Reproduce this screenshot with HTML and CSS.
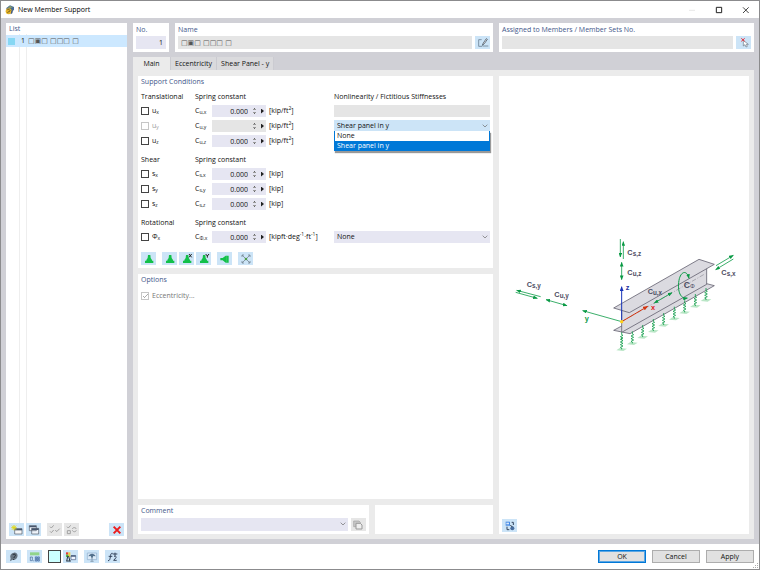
FILE: index.html
```html
<!DOCTYPE html>
<html lang="en">
<head>
<meta charset="utf-8">
<title>New Member Support</title>
<link rel="stylesheet" href="styles.css">
</head>
<body>
<div class="window">
  <header class="titlebar">
    <svg class="app-icon" viewBox="0 0 30 30"><path d="M4 9 15 1l12 5v9l-9 6-13-4z" fill="#4a6b94"/><path d="M8 7l8-4 7 4-7 3z" fill="#86a06d"/><circle cx="11" cy="19" r="9" fill="#e3b32a"/><path d="M7 14c5-2 9 1 8 4s-6 1-8 5" fill="none" stroke="#77601b" stroke-width="3"/><path d="M19 18l5-2-2 9-5 3z" fill="#3e567f"/></svg>
    <h1>New Member Support</h1>
    <div class="window-controls">
      <button class="wc" aria-label="Minimize" disabled><svg viewBox="0 0 24 24"><path d="M3 13h18" stroke="#ddd" stroke-width="2"/></svg></button>
      <button class="wc" aria-label="Maximize"><svg viewBox="0 0 24 24"><path d="M4 4h16v16H4z" fill="none" stroke="#222" stroke-width="3"/></svg></button>
      <button class="wc" aria-label="Close"><svg viewBox="0 0 24 24"><path d="M3 4l17 17M20 4 3 21" stroke="#222" stroke-width="2.5"/></svg></button>
    </div>
  </header>

  <main class="workspace">
    <aside class="card list">
      <h2>List</h2>
      <div class="list-body">
        <div class="list-row"><span class="swatch"></span><span class="row-no">1</span><span class="boxes">□▣□ □□□ □</span></div>
      </div>
      <div class="list-tools">
        <button class="tool" aria-label="New"><svg viewBox="0 0 42 36"><path d="M14 14h22v16H14z" fill="#f7f7f7" stroke="#505968" stroke-width="2"/><path d="M14 14h22v5H14z" fill="#46566d"/><path d="M12 3v16M4 11h16M6 5l12 12M18 5 6 17" stroke="#e0d91b" stroke-width="3"/></svg></button>
        <button class="tool" aria-label="Copy"><svg viewBox="0 0 42 36"><path d="M7 5h21v15H7zM14 13h21v17H14z" fill="#eef3fa" stroke="#505968" stroke-width="2"/><path d="M7 5h21v5H7zM14 13h21v5H14z" fill="#46566d"/></svg></button>
        <button class="tool muted gap" aria-label="Check all" disabled><svg viewBox="0 0 42 36"><path d="M6 8l4 4 7-8M6 22l4 4 7-8M22 18l4 5 9-9" fill="none" stroke="#a0a0a0" stroke-width="3"/></svg></button>
        <button class="tool muted" aria-label="Invert check" disabled><svg viewBox="0 0 42 36"><path d="M6 8l4 4 7-8M7 20h9v9H7zM22 15c2-6 10-5 12 0M34 19c-2 6-10 5-12 0" fill="none" stroke="#a0a0a0" stroke-width="3"/></svg></button>
        <button class="tool end" aria-label="Delete"><svg viewBox="0 0 42 36"><path d="M11 8l20 20M31 8 11 28" stroke="#ec1c1c" stroke-width="6"/></svg></button>
      </div>
    </aside>

    <div class="detail">
      <div class="top-fields">
        <div class="card no-card"><label for="no">No.</label><input id="no" class="field" value="1"></div>
        <div class="card wide-card"><label for="name">Name</label>
          <div class="field-line"><input id="name" class="field off boxes" value="□▣□ □□□ □" readonly>
          <button class="tool" aria-label="Edit name"><svg viewBox="0 0 42 36"><path d="M17 8H8v20h11M21 27h16" fill="none" stroke="#56697d" stroke-width="2"/><path d="M19 25l3-7 9-13 3 2-9 13z" fill="#fff" stroke="#293745" stroke-width="2"/></svg></button></div></div>
        <div class="card wide-card side"><label for="assigned">Assigned to Members / Member Sets No.</label>
          <div class="field-line"><input id="assigned" class="field off" readonly>
          <button class="tool" aria-label="Select members"><svg viewBox="0 0 42 36"><path d="M19 10v17l5-4 3 7 4-2-3-6h6z" fill="#fff" stroke="#687482" stroke-width="2"/><path d="M13 4l10 9M23 4l-10 9" stroke="#e52d38" stroke-width="3"/></svg></button></div></div>
      </div>

      <nav class="tabs" role="tablist">
        <button class="tab active" role="tab" aria-selected="true">Main</button>
        <button class="tab" role="tab">Eccentricity</button>
        <button class="tab" role="tab">Shear Panel - y</button>
      </nav>

      <div class="page">
        <div class="page-main">
          <section class="panel conditions">
            <h2>Support Conditions</h2>
            <div class="group">
              <h3 class="c-check">Translational</h3><h3 class="c-value">Spring constant</h3><h3 class="c-combo">Nonlinearity / Fictitious Stiffnesses</h3>
              <label class="c-check"><input type="checkbox"><span>u<sub>x</sub></span></label>
              <label for="cux">C<sub>u,x</sub></label>
              <div class="spin"><input id="cux" value="0.000"><button class="step" aria-label="Step"></button><button class="more" aria-label="More"></button></div>
              <span>[kip/ft<sup>2</sup>]</span>
              <div class="combo blank"></div>

              <label class="c-check dim"><input type="checkbox" disabled><span>u<sub>y</sub></span></label>
              <label for="cuy">C<sub>u,y</sub></label>
              <div class="spin off"><input id="cuy" disabled><button class="step" aria-label="Step"></button><button class="more" aria-label="More"></button></div>
              <span>[kip/ft<sup>2</sup>]</span>
              <div class="combo open">
                <select aria-label="Nonlinearity in y"><option>None</option><option selected>Shear panel in y</option></select>
                <svg class="chev" viewBox="0 0 18 12"><path d="M2 2l7 7 7-7"/></svg>
                <ul class="dropdown" role="listbox"><li role="option">None</li><li role="option" aria-selected="true" class="picked">Shear panel in y</li></ul>
              </div>

              <label class="c-check"><input type="checkbox"><span>u<sub>z</sub></span></label>
              <label for="cuz">C<sub>u,z</sub></label>
              <div class="spin"><input id="cuz" value="0.000"><button class="step" aria-label="Step"></button><button class="more" aria-label="More"></button></div>
              <span>[kip/ft<sup>2</sup>]</span>
            </div>

            <div class="group">
              <h3 class="c-check">Shear</h3><h3 class="c-value">Spring constant</h3>
              <label class="c-check"><input type="checkbox"><span>s<sub>x</sub></span></label>
              <label for="csx">C<sub>s,x</sub></label>
              <div class="spin"><input id="csx" value="0.000"><button class="step" aria-label="Step"></button><button class="more" aria-label="More"></button></div>
              <span>[kip]</span>
              <label class="c-check"><input type="checkbox"><span>s<sub>y</sub></span></label>
              <label for="csy">C<sub>s,y</sub></label>
              <div class="spin"><input id="csy" value="0.000"><button class="step" aria-label="Step"></button><button class="more" aria-label="More"></button></div>
              <span>[kip]</span>
              <label class="c-check"><input type="checkbox"><span>s<sub>z</sub></span></label>
              <label for="csz">C<sub>s,z</sub></label>
              <div class="spin"><input id="csz" value="0.000"><button class="step" aria-label="Step"></button><button class="more" aria-label="More"></button></div>
              <span>[kip]</span>
            </div>

            <div class="group">
              <h3 class="c-check">Rotational</h3><h3 class="c-value">Spring constant</h3>
              <label class="c-check"><input type="checkbox"><span>Φ<sub>x</sub></span></label>
              <label for="cphi">C<sub>Φ,x</sub></label>
              <div class="spin"><input id="cphi" value="0.000"><button class="step" aria-label="Step"></button><button class="more" aria-label="More"></button></div>
              <span>[kipft·deg<sup>-1</sup>·ft<sup>-1</sup>]</span>
              <div class="combo"><select aria-label="Rotational nonlinearity"><option>None</option></select><svg class="chev" viewBox="0 0 18 12"><path d="M2 2l7 7 7-7"/></svg></div>
            </div>

            <div class="presets">
              <button class="tool" aria-label="Fixed support"><svg viewBox="0 0 42 36"><use href="#foot"/></svg></button>
              <button class="tool gap" aria-label="Hinged support"><svg viewBox="0 0 42 36"><use href="#foot"/></svg></button>
              <button class="tool" aria-label="Support in X"><svg viewBox="0 0 42 36"><use href="#foot"/><path d="M27 3l8 10M35 3l-8 10" stroke="#222" stroke-width="3"/></svg></button>
              <button class="tool" aria-label="Support in Y"><svg viewBox="0 0 42 36"><use href="#foot"/><path d="M26 3l5 6 5-6M31 8v6" fill="none" stroke="#222" stroke-width="3"/></svg></button>
              <button class="tool gap" aria-label="Lateral support"><svg viewBox="0 0 42 36"><path d="M7 15h7l9-7h9v21h-9l-9-7H7z" fill="#12c04a"/><path d="M26 8v21" stroke="#6be18c" stroke-width="1"/></svg></button>
              <button class="tool gap" aria-label="Free"><svg viewBox="0 0 42 36"><path d="M10 7l22 22M32 7 10 29" stroke="#61707d" stroke-width="2"/><path d="M9 12V6h6M27 6h6v6M9 24v6h6M27 30h6v-6" fill="none" stroke="#61707d" stroke-width="2"/><circle cx="21" cy="18" r="4" fill="#4f9b48"/></svg></button>
            </div>
          </section>

          <section class="panel options">
            <h2>Options</h2>
            <label class="check-line dim"><input type="checkbox" checked disabled><span>Eccentricity...</span></label>
          </section>

          <div class="bottom">
            <section class="panel comment">
              <h2><label for="comment">Comment</label></h2>
              <div class="field-line">
                <div class="combo"><select id="comment"><option></option></select><svg class="chev" viewBox="0 0 18 12"><path d="M2 2l7 7 7-7"/></svg></div>
                <button class="tool muted" aria-label="Comment library" disabled><svg viewBox="0 0 42 36"><path d="M8 6h16l4 4v13H8z" fill="#c7c7c7" stroke="#a0a0a0" stroke-width="2"/><path d="M15 13h13l5 5v12H15z" fill="#eee" stroke="#999" stroke-width="3"/></svg></button>
              </div>
            </section>
            <section class="panel spare"></section>
          </div>
        </div>

        <section class="panel preview">
          <div class="drawing">
            <svg viewBox="-3 0 750 405" role="img" aria-label="Member support diagram">
              <defs>
                <marker id="ag" viewBox="0 0 10 10" refX="9" refY="5" markerWidth="14" markerHeight="11" markerUnits="userSpaceOnUse" orient="auto-start-reverse" preserveAspectRatio="none"><path d="M0 0 10 5 0 10z" fill="#0a9a45"/></marker>
                <marker id="ab" viewBox="0 0 10 10" refX="9" refY="5" markerWidth="15" markerHeight="12" markerUnits="userSpaceOnUse" orient="auto" preserveAspectRatio="none"><path d="M0 0 10 5 0 10z" fill="#1734b8"/></marker>
                <marker id="ar" viewBox="0 0 10 10" refX="9" refY="5" markerWidth="15" markerHeight="12" markerUnits="userSpaceOnUse" orient="auto" preserveAspectRatio="none"><path d="M0 0 10 5 0 10z" fill="#d43410"/></marker>
                <g id="spring"><path d="M-16 3-6-4 16-2 5 5z" fill="#b9e6c6"/><path d="M0 0v-4l-4-2 8-4-8-4 8-4-8-4 8-4-4-2v-8" fill="none" stroke="#0a9a45" stroke-width="2.4"/></g>
                <path id="foot" d="M18 6h7l1 9 4 6v2h4v7H9v-7h4v-2l4-6z" fill="#12c04a"/>
              </defs>
              <g stroke="#62606e" stroke-width="2.4" stroke-linejoin="round" fill="#dbdae0">
                <path d="M341 316 365 303 597 170 643 182 390 326z"/>
                <path d="M365 256v66L620 178v-51z"/>
                <path d="M341 249 597 103 643 118 388 263z"/>
              </g>
              <path d="M365 290 616 146" stroke="#85858d" stroke-width="1.8" stroke-dasharray="14 5 3 5"/>
              <use href="#spring" x="397" y="355"/><use href="#spring" x="428" y="336"/><use href="#spring" x="460" y="318"/><use href="#spring" x="491" y="300"/><use href="#spring" x="523" y="281"/><use href="#spring" x="554" y="262"/><use href="#spring" x="586" y="243"/><use href="#spring" x="618" y="225"/>
              <use href="#spring" x="365" y="373"/>
              <path d="M365 345l-4-2 8-4-8-4 8-4-4-2v-7" fill="none" stroke="#0a9a45" stroke-width="2.4"/>
              <g fill="none" stroke="#0a9a45" stroke-width="2.4">
                <path d="M361 42v54" marker-end="url(#ag)"/>
                <path d="M370 102V50" marker-end="url(#ag)"/>
                <path d="M648 122l52-31" marker-end="url(#ag)"/>
                <path d="M700 102l-53 32" marker-end="url(#ag)"/>
                <path d="M122 215 50 196" marker-end="url(#ag)"/>
                <path d="M47 202l65 18" marker-end="url(#ag)"/>
                <path d="M365 112v52" marker-start="url(#ag)" marker-end="url(#ag)"/>
                <path d="M138 224l63 18" marker-start="url(#ag)" marker-end="url(#ag)"/>
                <path d="M463 234l53-31" marker-start="url(#ag)" marker-end="url(#ag)"/>
                <path d="M365 290 248 257" marker-end="url(#ag)"/>
                <path d="M567 160C561 136 545 137 538 161c-7 30 0 63 24 58" stroke-width="3" marker-start="url(#ag)" marker-end="url(#ag)"/>
              </g>
              <path d="M365 290V185" stroke="#1734b8" stroke-width="3" marker-end="url(#ab)"/>
              <path d="M365 290 443 244" stroke="#d43410" stroke-width="3" marker-end="url(#ar)"/>
              <circle cx="365" cy="290" r="5" fill="#ffd21a"/>
              <g class="marks">
                <text x="382" y="91">C<tspan class="s" dy="3">s,z</tspan></text>
                <text x="382" y="149">C<tspan class="s" dy="3">u,z</tspan></text>
                <text x="664" y="149">C<tspan class="s" dy="3">s,x</tspan></text>
                <text x="80" y="186">C<tspan class="s" dy="3">s,y</tspan></text>
                <text x="163" y="217">C<tspan class="s" dy="3">u,y</tspan></text>
                <text x="443" y="206">C<tspan class="s" dy="3">u,x</tspan></text>
                <text x="551" y="188" class="big">C<tspan class="phi" dy="2">Φ</tspan></text>
                <text x="377" y="195" class="z">z</text>
                <text x="453" y="254" class="x">x</text>
                <text x="254" y="289" class="y">y</text>
              </g>
            </svg>
          </div>
          <div class="preview-tools"><button class="tool" aria-label="Switch view"><svg viewBox="0 0 42 36"><path d="M8 5h13v12H8z" fill="#4389e4"/><path d="M10 8h8v5h-8z" fill="#d9e8fa"/><path d="M12 20v9h7M26 7h5v8" fill="none" stroke="#33455d" stroke-width="3"/><circle cx="28" cy="25" r="6" fill="#486d9e"/><path d="M22 15l6 6" stroke="#2d394a" stroke-width="3"/></svg></button></div>
        </section>
      </div>
    </div>
  </main>

  <footer class="footer">
    <button class="tool" aria-label="Help"><svg viewBox="0 0 42 36"><path d="M21 5c11-2 14 12 7 18-5 5-11 3-11 3l-8 5 2-9C7 13 13 6 21 5z" fill="#677583"/><path d="M17 12c3-5 10-2 8 2-1 3-4 3-4 7M20 24v3" fill="none" stroke="#222a33" stroke-width="3"/></svg></button>
    <button class="tool gap" aria-label="Units"><svg viewBox="0 0 42 36"><path d="M6 4h28v9H6z" fill="#91d48b"/><path d="M20 15h15v17H20z" fill="#a9cbf4"/><path d="M7 18h6v11H7zM17 28v3M22 18h5v5h-5zM29 18h5v5h-5zM22 25h5v5h-5zM29 25h5v5h-5z" fill="none" stroke="#3d6094" stroke-width="2"/></svg></button>
    <button class="color gap" aria-label="Color"></button>
    <button class="tool" aria-label="Display"><svg viewBox="0 0 42 36"><path d="M6 4h7v7H6z" fill="#e83b2f"/><path d="M6 11h7v7H6z" fill="#4dbb48"/><path d="M13 4h6v14h-6z" fill="#eed23f"/><path d="M8 31l3-15h3l4 15M8 30h12" fill="none" stroke="#263341" stroke-width="3"/><path d="M21 14h14v12H21z" fill="#eff5ff" stroke="#4a5c80" stroke-width="2"/><path d="M21 13h14v4H21z" fill="#405477"/></svg></button>
    <button class="tool gap" aria-label="View"><svg viewBox="0 0 42 36"><path d="M7 6h28v20H7z" fill="#dcebf8" stroke="#8dabcb" stroke-width="2"/><path d="M10 16c4-10 18-11 22 0l-7-1-4 8-4-8z" fill="#53718d"/><path d="M21 19v12M16 31h10" stroke="#6d8397" stroke-width="2"/></svg></button>
    <button class="tool gap" aria-label="Formula"><svg viewBox="0 0 42 36"><path d="M20 7c-6-2-6 5-7 11s-2 12-7 11M8 16h11M24 17c3-3 8-1 6 3l-7 8h9M20 9h14M27 5v10" fill="none" stroke="#34445d" stroke-width="3"/></svg></button>
    <div class="actions"><button class="btn primary">OK</button><button class="btn">Cancel</button><button class="btn">Apply</button></div>
    <svg class="grip" viewBox="0 0 6 6"><path d="M4 0h1v1H4zM2 2h1v1H2zM4 2h1v1H4zM0 4h1v1H0zM2 4h1v1H2zM4 4h1v1H4z" fill="#aaa"/></svg>
  </footer>
</div>
</body>
</html>
```
FILE: styles.css
```css
* { box-sizing: border-box; }
body {
  margin: 0;
  font: 7px/10px "Open Sans", "Noto Sans", sans-serif;
  color: #111;
}
button, input, select { font: inherit; color: inherit; margin: 0; padding: 0; border: 0; border-radius: 0; }
h1, h2, h3 { margin: 0; font-size: 7px; line-height: 10px; font-weight: 400; }
svg { display: block; }
.window { display: flex; flex-direction: column; min-height: 100vh; border: 1px solid #8b8b8d; background: #fff; }

.titlebar { display: flex; align-items: center; height: 17px; padding-left: 4px; gap: 3px; }
.titlebar h1 { flex: 1; color: #000; }
.app-icon { width: 10px; height: 10px; }
.window-controls { display: flex; }
.wc { width: 27px; height: 16px; display: grid; place-items: center; background: none; }
.wc svg { width: 8px; height: 8px; }

.workspace { flex: 1; display: flex; gap: 6px; padding: 5px; background: #d0d0d6; }
.card { background: #fff; padding: 1px 3px 3px; }
.card > label, h2, .card > h2 { display: block; color: #43578a; font-weight: 500; }
h2 label { display: block; }

.list { width: 121px; display: flex; flex-direction: column; padding: 1px 0 3px; }
.list > h2 { padding-left: 3px; }
.list-body {
  flex: 1;
  background: linear-gradient(#eee, #eee) 13px 0 / 1px 100% no-repeat, linear-gradient(#eee, #eee) 20px 0 / 1px 100% no-repeat;
}
.list-row { display: flex; align-items: center; height: 12px; margin-top: 1px; padding-left: 2px; background: #cce8ff; }
.swatch { width: 7px; height: 7px; background: #86d7f3; }
.row-no { width: 10px; text-align: right; margin-right: 3px; }
.boxes { font-family: "DejaVu Sans", sans-serif; color: #555; }
.list-tools { display: flex; gap: 2px; padding: 0 3px; }

.tool { flex: none; display: grid; place-items: center; width: 15px; height: 13px; background: #cce4f7; }
.tool svg { width: 14px; height: 12px; }
.tool.muted { background: #e6e6e6; }
.tool.gap, .color.gap { margin-left: 4px; }
.tool.end { margin-left: auto; }

.detail { flex: 1; min-width: 0; display: flex; flex-direction: column; }
.top-fields { display: flex; gap: 6px; }
.top-fields label { height: 12px; line-height: 12px; }
.no-card { width: 36px; }
.wide-card { flex: 1; min-width: 0; }
.side { flex: 0 0 255px; }
.field { display: block; width: 100%; min-width: 0; height: 13px; padding: 0 3px; background: #e6e6f2; }
.field.off { background: #e5e5e5; }
.no-card .field { text-align: right; padding-right: 3px; }
.field-line { display: flex; gap: 3px; }
.field-line > .combo { flex: 1; }

.tabs { display: flex; margin-top: 5px; }
.tab { height: 13px; padding: 1px 4px 0; background: #dadadd; border-right: 1px solid #cbcbd1; color: #111; }
.tab.active { width: 38px; background: #ebebeb; }

.page { flex: 1; display: flex; gap: 6px; padding: 6px 5px 5px; background: #ebebeb; }
.page-main { flex: 1; min-width: 0; display: flex; flex-direction: column; gap: 6px; }
.panel { background: #fff; padding: 1px 3px 3px; }
.conditions { display: flex; flex-direction: column; }
.group {
  display: grid;
  grid-template-columns: 54px 17px 54px 65px minmax(0, 1fr);
  grid-template-rows: 10px;
  row-gap: 3px;
  align-items: center;
  margin-bottom: 8px;
}
.conditions > h2 { margin-bottom: 5px; }
.group h3 { white-space: nowrap; color: #111; }
.group > span { padding-left: 3px; white-space: nowrap; }
.c-check { grid-column: 1; }
.c-value { grid-column: 2 / 4; }
.c-combo { grid-column: 5; }
.group > .combo { grid-column: 5; margin-left: 3px; }
.group > .c-combo { margin-left: 3px; }
label.c-check, .check-line { display: flex; align-items: center; gap: 3px; height: 12px; }
.dim { color: #999; }
.check-line { color: #777; }
sub, sup { font-size: 5px; line-height: 0; }
sub { vertical-align: -1px; }
input[type="checkbox"] { appearance: none; width: 8px; height: 8px; border: 1px solid #444; background: #fff; }
input[type="checkbox"]:disabled { border-color: #c6c6c6; }
input[type="checkbox"]:checked {
  background: linear-gradient(-45deg, transparent 45%, #aaa 45% 60%, transparent 60%) 2px 1px / 4px 4px no-repeat, linear-gradient(45deg, transparent 40%, #aaa 40% 65%, transparent 65%) 1px 3px / 2px 2px no-repeat, #fff;
}
.spin { display: flex; align-items: center; height: 12px; background: #e6e6f2; }
.spin input { width: 36px; height: 12px; text-align: right; background: transparent; }
.spin.off { background: #e5e5e5; }
.step { width: 3px; height: 8px; margin-left: 5px; background: linear-gradient(#666, #666) 1px 1px / 1px 1px no-repeat, linear-gradient(#999, #999) 0 2px / 3px 1px no-repeat, linear-gradient(#999, #999) 0 5px / 3px 1px no-repeat, linear-gradient(#666, #666) 1px 6px / 1px 1px no-repeat; }
.more { width: 3px; height: 5px; margin-left: 5px; background: #222; clip-path: polygon(0 0, 100% 50%, 0 100%); }

.combo { position: relative; height: 12px; }
.combo select { display: block; appearance: none; width: 100%; height: 12px; padding: 0 3px; background: #e6e6f2; }
.comment .combo, .comment select { height: 13px; }
.combo.blank { background: #e5e5e5; }
.combo.open select { background: #cce4f7; }
.chev { position: absolute; right: 2px; top: 4px; width: 6px; height: 4px; pointer-events: none; }
.chev path { fill: none; stroke: #666; stroke-width: 2; }
.dropdown { position: absolute; z-index: 2; top: 11px; left: 0; right: 0; margin: 0; padding: 0; list-style: none; background: #fff; border: 1px solid #0078d7; border-top: 0; border-bottom: 0; box-shadow: 1px 2px 1px #999; }
.dropdown li { padding: 0 2px; line-height: 10px; }
.dropdown .picked { background: #0078d7; color: #fff; }

.presets { display: flex; gap: 2px; margin-top: 1px; }
.options { flex: 1; }
.options > h2 { margin-bottom: 5px; }
.bottom { display: flex; gap: 6px; }
.comment { flex: 2; }
.comment h2 { margin-bottom: 2px; }
.spare { flex: 1; }

.preview { flex: 0 0 250px; display: flex; flex-direction: column; padding: 0; }
.drawing { flex: 1; display: grid; align-items: center; }
.drawing svg { width: 100%; }
.preview-tools { height: 26px; padding: 11px 3px 0; }
.marks { font: bold 22px "Liberation Sans", sans-serif; fill: #4d4c61; }
.marks .s { font-size: 19px; }
.marks .big { font-size: 26px; }
.marks .phi { font-size: 18px; font-weight: 400; }
.marks .x { fill: #e01818; }
.marks .y { fill: #0a9a45; }
.marks .z { fill: #1f2f9c; }

.footer { position: relative; display: flex; align-items: center; gap: 2px; height: 25px; padding: 0 5px; }
.footer .gap { margin-left: 4px; }
.color { width: 13px; height: 13px; background: #ccffff; border: 1px solid #444; }
.actions { display: flex; gap: 6px; margin-left: auto; }
.btn { width: 48px; height: 13px; background: #e1e1e1; border: 1px solid #adadad; color: #111; }
.btn.primary { border: 1px solid #0078d7; outline: 1px solid #5ba6e3; outline-offset: -2px; }
.grip { position: absolute; right: 0; bottom: 0; width: 6px; height: 6px; }
```
